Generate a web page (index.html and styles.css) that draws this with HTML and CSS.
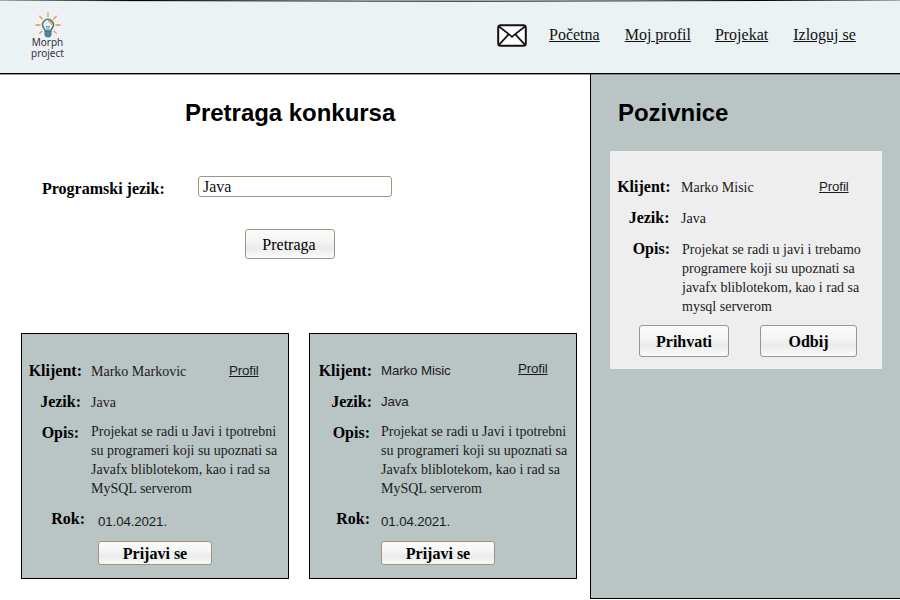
FILE: index.html
```html
<!DOCTYPE html>
<html lang="sr-Latn">
<head>
<meta charset="utf-8">
<title>Morph project</title>
<link rel="stylesheet" href="styles.css">
</head>
<body>
<header class="topbar">
  <div class="logo">
    <svg class="bulb" viewBox="0 0 26 26" width="26" height="26" fill="none">
      <g stroke="#f3921e" stroke-width="1.300" stroke-linecap="round">
        <path d="M13 1v3.500M4.700 4.200l2.600 2.900M21.300 4.200l-2.600 2.900M1 13h4M21 13h4M4.700 21.400l2.300-2.300M21.300 21.400l-2.300-2.300"/>
        <path d="M13.500 9q2.800.5 3 3.500"/>
      </g>
      <path d="M10.300 19c0-2-2.800-3-2.800-6.200a5.500 5.500 0 0 1 11 0c0 3.200-2.800 4.200-2.800 6.200z" stroke="#3c788b" stroke-width="1.500"/>
      <path d="M11 14l1.300 1 .7-1 .7 1 1.300-1M12 18.500v-3M14 18.500v-3" stroke="#3c788b" stroke-width=".8"/>
      <path d="M9.500 19h7v4L15 25.200h-4L9.500 23z" fill="#3c788b"/>
      <path d="M10.500 21h5M10.800 23h4.400" stroke="#a9c4cd" stroke-width=".4"/>
    </svg>
    <div class="brand"><span>Morph</span><span>project</span></div>
  </div>
  <nav class="nav">
    <svg class="mail" viewBox="0 0 30 23" width="30" height="23" fill="none" stroke="#111" stroke-width="2">
      <rect x="1.200" y="1.200" width="27.600" height="20.600" rx="2.500" fill="#fff"/>
      <path d="M2 2.500l9.800 7.700 3.200 2.600 3.200-2.600L28 2.500M2 20.800l9.800-10.600M28 20.800l-9.800-10.600" stroke-width="1.700"/>
    </svg>
    <a class="home">Početna</a><a class="me">Moj profil</a><a class="proj">Projekat</a><a>Izloguj se</a>
  </nav>
</header>
<div class="page">
  <main class="main">
    <h1>Pretraga konkursa</h1>
    <div class="field">
      <label for="lang">Programski jezik:</label>
      <input id="lang" type="text" value="Java">
    </div>
    <button class="btn search">Pretraga</button>
    <div class="cards">
      <section class="card first">
        <div class="row"><b class="k">Klijent:</b><span class="v">Marko Markovic</span><a class="profile">Profil</a></div>
        <div class="row"><b class="k jezik">Jezik:</b><span class="v">Java</span></div>
        <div class="row about"><b class="k opis">Opis:</b><p>Projekat se radi u Javi i tpotrebni<br>su programeri koji su upoznati sa<br>Javafx bliblotekom, kao i rad sa<br>MySQL serverom</p></div>
        <div class="row due"><b class="k rok">Rok:</b><span class="v sans date">01.04.2021.</span></div>
        <button class="btn bold apply">Prijavi se</button>
      </section>
      <section class="card second">
        <div class="row"><b class="k">Klijent:</b><span class="v sans">Marko Misic</span><a class="profile">Profil</a></div>
        <div class="row"><b class="k">Jezik:</b><span class="v sans">Java</span></div>
        <div class="row about"><b class="k opis">Opis:</b><p>Projekat se radi u Javi i tpotrebni<br>su programeri koji su upoznati sa<br>Javafx bliblotekom, kao i rad sa<br>MySQL serverom</p></div>
        <div class="row due"><b class="k rok">Rok:</b><span class="v sans date">01.04.2021.</span></div>
        <button class="btn bold apply">Prijavi se</button>
      </section>
    </div>
  </main>
  <aside class="side">
    <h1>Pozivnice</h1>
    <section class="invite">
      <div class="row"><b class="k">Klijent:</b><span class="v">Marko Misic</span><a class="profile">Profil</a></div>
      <div class="row"><b class="k jezik">Jezik:</b><span class="v">Java</span></div>
      <div class="row about"><b class="k opis">Opis:</b><p>Projekat se radi u javi i trebamo<br>programere koji su upoznati sa<br>javafx bliblotekom, kao i rad sa<br>mysql serverom</p></div>
      <div class="actions"><button class="btn bold accept">Prihvati</button><button class="btn bold reject">Odbij</button></div>
    </section>
  </aside>
</div>
</body>
</html>
```
FILE: styles.css
```css
* { box-sizing: border-box; }
body {
  margin: 0;
  width: 900px;
  height: 600px;
  overflow: hidden;
  background: #fff;
  color: #000;
  font: 16px/18px "Liberation Serif", serif;
}
a { text-decoration: underline; }
h1 { margin: 0; font: bold 24px/28px "Liberation Sans", sans-serif; letter-spacing: -.03px; }

.topbar {
  height: 74px;
  display: flex;
  justify-content: space-between;
  background:
    linear-gradient(90deg, #a5adad 0, #000 15%, #999 40%, #aaa 55%, #777 70%, #000 84%, #a5adad 100%) 0 0 / 100% 1px no-repeat,
    linear-gradient(90deg, #eaf2f4 8%, #555 48%, #555 55%, #eaf2f4 85%) 0 1px / 100% 1px no-repeat,
    #eaf2f4;
  border-bottom: 1px solid #000;
}
.logo {
  width: 41px;
  height: 51px;
  margin: 11px 0 0 28px;
  display: flex;
  flex-direction: column;
  align-items: center;
  background: #edf2f8;
}
.bulb { display: block; flex: none; margin: 1px 0 0 -2px; }
.brand {
  margin: -1px 0 0 -2px;
  font: 10px/11px "Noto Sans", sans-serif;
  color: #333;
  text-align: center;
}
.brand span { display: block; }
.nav { display: flex; width: 403px; padding-top: 26px; color: #111; }
.mail { flex: none; margin: -2px 22px 0 0; }
.nav a { white-space: nowrap; }
.home { margin-right: 25px; }
.me { margin-right: 24px; }
.proj { margin-right: 25px; }

.page {
  display: flex;
  height: 526px;
  background: linear-gradient(#999, #999) 0 0 / 100% 1px no-repeat;
}
.main { width: 590px; }
.main h1 { margin: 25px 0 0 185px; }
.field { display: flex; margin-top: 49px; }
.field label { width: 156px; margin-left: 42px; padding-top: 4px; font-weight: bold; }
.field input {
  width: 194px;
  height: 21px;
  padding: 0 4px;
  border: 1px solid #a39480;
  border-radius: 3px;
  background: #fff;
  color: #111;
  font: 16px/19px "Liberation Serif", serif;
}
.btn {
  display: block;
  padding: 2px 0 0;
  border: 1px solid #a39480;
  border-radius: 3px;
  background: linear-gradient(#fbfbfb, #f5f5f5 40%, #ebebeb 65%, #fbfbfb);
  color: #000;
  font: 16px/18px "Liberation Serif", serif;
}
.bold { font-weight: bold; }
.search { width: 90px; height: 30px; margin: 31px 0 0 245px; padding-right: 2px; }

.cards { display: flex; gap: 20px; margin: 74px 0 0 21px; }
.card {
  width: 268px;
  height: 246px;
  padding-top: 28px;
  background: #b9c5c5;
  border: 1px solid #000;
}
.row { display: flex; height: 31px; }
.k { flex: none; width: 69px; padding-right: 9px; text-align: right; }
.v { flex: 1; margin-top: 1px; font-size: 14px; color: #1a1a1a; }
.sans, .profile {
  font: 13.33px/18px "Liberation Sans", sans-serif;
  letter-spacing: -.13px;
  color: #1a1a1a;
}
.sans { margin-top: 0; }
.profile { flex: none; width: 59px; }
.about { height: 86px; }
.row p { margin: -2px 0 0; font-size: 14px; line-height: 19px; color: #1a1a1a; white-space: nowrap; }
.due { height: 31px; }
.date { margin-top: 3px; }
.apply { width: 114px; height: 24px; }

.first .jezik { padding-right: 10px; }
.first .opis { padding-right: 12px; }
.first .rok { padding-right: 6px; }
.first .date { margin-left: 7px; }
.first .apply { margin-left: 76px; }

.second .k { width: 71px; }
.second .opis, .second .rok { padding-right: 11px; }
.second .profile { width: 58px; margin-top: -2px; }
.second .apply { margin-left: 71px; }

.side {
  width: 310px;
  height: 525px;
  background: linear-gradient(#7f8888, #7f8888) 0 0 / 100% 1px no-repeat, #b9c5c5;
  border-left: 1px solid #000;
  border-bottom: 1px solid #000;
}
.side h1 { margin: 25px 0 0 27px; }
.invite { width: 272px; height: 218px; margin: 24px 0 0 19px; padding-top: 27px; background: #eee; }
.invite .k { width: 71px; padding-right: 10.5px; }
.invite .jezik { padding-right: 11.5px; }
.invite .opis { padding-right: 11px; }
.invite .profile { width: 63px; }
.invite .about { height: 85px; }
.invite p { margin: 0 0 0 1px; }
.actions { display: flex; gap: 31px; margin-left: 29px; }
.accept { width: 90px; height: 32px; }
.reject { width: 97px; height: 32px; }
```
